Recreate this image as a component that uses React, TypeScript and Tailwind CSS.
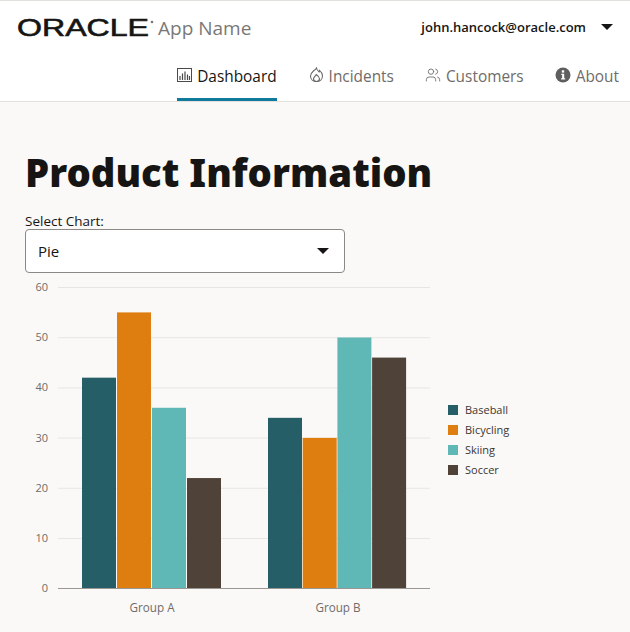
import React from 'react';
import { Users } from 'lucide-react';

const font = { fontFamily: '"Open Sans", "Noto Sans", sans-serif' };

const series = [
  { name: 'Baseball', color: '#255e66', a: 42, b: 34 },
  { name: 'Bicycling', color: '#de7e10', a: 55, b: 30 },
  { name: 'Skiing', color: '#5fb8b6', a: 36, b: 50 },
  { name: 'Soccer', color: '#4f4238', a: 22, b: 46 },
];

const ticks = [60, 50, 40, 30, 20, 10, 0];

const BarIcon = () => (
  <svg width="15" height="15" viewBox="0 0 15 15" fill="none" stroke="#4a4a4a" strokeWidth="1" className="mb-1">
    <rect x="0.5" y="0.5" width="14" height="13" />
    <path d="M3 12V8M5.5 12V5.5M8 12V3.5M10.5 12V6.5M12.5 12V8" strokeWidth="1.2" />
  </svg>
);

const FlameIcon = () => (
  <svg width="15" height="16" viewBox="0 0 15 16" fill="none" stroke="#6b6b6b" strokeWidth="1.1" className="mb-1">
    <path d="M7.5 1c.4 2.2 1.4 3 2.6 4 .3-.6.4-1 .4-1.6 1.8 1.4 3 3.300 3 5.600 0 3.300-2.700 5.500-6 5.500s-6-2.200-6-5.500c0-2.700 2-4 3.500-5.500C6 2.900 6.900 2.200 7.500 1Z" />
    <path d="M7.500 14.500c-1.800 0-3-1.200-3-2.700 0-1.700 1.800-2.300 2.800-4.300 1.400 1 3.200 2.500 3.200 4.300 0 1.500-1.200 2.700-3 2.700Z" />
  </svg>
);

const InfoIcon = () => (
  <svg width="16" height="16" viewBox="0 0 16 16" className="mb-1">
    <circle cx="8" cy="8" r="7.500" fill="#5f5f5f" />
    <rect x="6.800" y="3.300" width="2.400" height="2.300" fill="#ffffff" />
    <path d="M6.300 6.700h2.900v4.600h1v1.300H6.100v-1.300h1V8h-.8Z" fill="#ffffff" />
  </svg>
);

const Tab = ({ icon, label, active }: { icon: React.ReactNode; label: string; active?: boolean }) => (
  <div className={`flex h-[46px] items-center gap-[5px] border-b-[3px] pt-[1px] ${active ? 'border-[#0f7a9c] text-[#161513]' : 'border-transparent text-[#6f6c69]'}`}>
    {icon}
    <span className="text-[15.4px] font-normal">{label}</span>
  </div>
);

const Chart = () => (
  <svg width="520" height="346" viewBox="0 0 520 346" className="block" style={font}>
    {ticks.map((t, i) => (
      <g key={t}>
        {t !== 0 && <line x1="33" x2="405" y1={8.5 + i * 50.2} y2={8.5 + i * 50.2} stroke="#e8e6e3" />}
        <text x="23" y={12 + i * 50.2} textAnchor="end" fontSize="11" fill="#6f6c69">{t}</text>
      </g>
    ))}
    {series.map((s, i) => (
      <g key={s.name}>
        <rect x={57 + i * 35} y={309.500 - s.a * 5.02} width="34" height={s.a * 5.02} fill={s.color} />
        <rect x={243 + i * 34.700} y={309.500 - s.b * 5.02} width="34" height={s.b * 5.02} fill={s.color} />
        <rect x="423" y={126 + i * 20} width="10" height="10" fill={s.color} />
        <text x="440" y={135 + i * 20} fontSize="11" fill="#3a3733">{s.name}</text>
      </g>
    ))}
    <line x1="33" x2="405" y1="309.500" y2="309.500" stroke="#9a9793" />
    <text x="127" y="333" textAnchor="middle" fontSize="11.700" fill="#6f6c69">Group A</text>
    <text x="313" y="333" textAnchor="middle" fontSize="11.700" fill="#6f6c69">Group B</text>
  </svg>
);

export default function App() {
  return (
    <div className="h-[632px] w-[630px] overflow-hidden bg-[#faf9f7]" style={font}>
      <header className="border-y border-[#e3e1de] bg-white">
        <div className="flex h-[54px] items-center justify-between pr-[17px] pl-[17px]">
          <div className="flex items-center gap-[4px]">
            <svg width="137" height="30" viewBox="0 0 137 30" className="block">
              <text x="0" y="23" fontSize="24" fontFamily='"Liberation Sans", sans-serif' fill="#161513" stroke="#161513" strokeWidth="0.6" textLength="132" lengthAdjust="spacingAndGlyphs">ORACLE</text>
              <circle cx="135" cy="9" r="1.300" fill="#777" />
            </svg>
            <span className="text-[19px] leading-none text-[#7a7876]">App Name</span>
          </div>
          <div className="flex items-center gap-[15px]">
            <span className="text-[13px] font-semibold text-[#161513]">john.hancock@oracle.com</span>
            <div className="mb-[3px] h-0 w-0 border-x-[6px] border-t-[6px] border-x-transparent border-t-[#161513]" />
          </div>
        </div>
        <nav className="flex justify-end pr-[11px]">
          <Tab active icon={<BarIcon />} label="Dashboard" />
          <div className="ml-[32px]">
            <Tab icon={<FlameIcon />} label="Incidents" />
          </div>
          <div className="ml-[31px]">
            <Tab icon={<Users size={16} strokeWidth={1.3} color="#6b6b6b" className="mb-1" />} label="Customers" />
          </div>
          <div className="ml-[31px]">
            <Tab icon={<InfoIcon />} label="About" />
          </div>
        </nav>
      </header>
      <main className="px-[25px] pt-[46px]">
        <h1 className="text-[38.3px] leading-[48px] font-black text-[#161513]" style={{ fontFamily: '"Noto Sans", sans-serif' }}>Product Information</h1>
        <label className="mt-[17px] block text-[13.5px] leading-[16px] text-[#161513]">Select Chart:</label>
        <div className="flex h-[44px] w-[320px] items-center justify-between rounded border border-[#8b8886] bg-white pr-[15px] pl-[12px] text-[15px] text-[#161513]">
          <span>Pie</span>
          <div className="h-0 w-0 border-x-[6px] border-t-[6px] border-x-transparent border-t-[#161513]" />
        </div>
        <div className="mt-[6px]">
          <Chart />
        </div>
      </main>
    </div>
  );
}
